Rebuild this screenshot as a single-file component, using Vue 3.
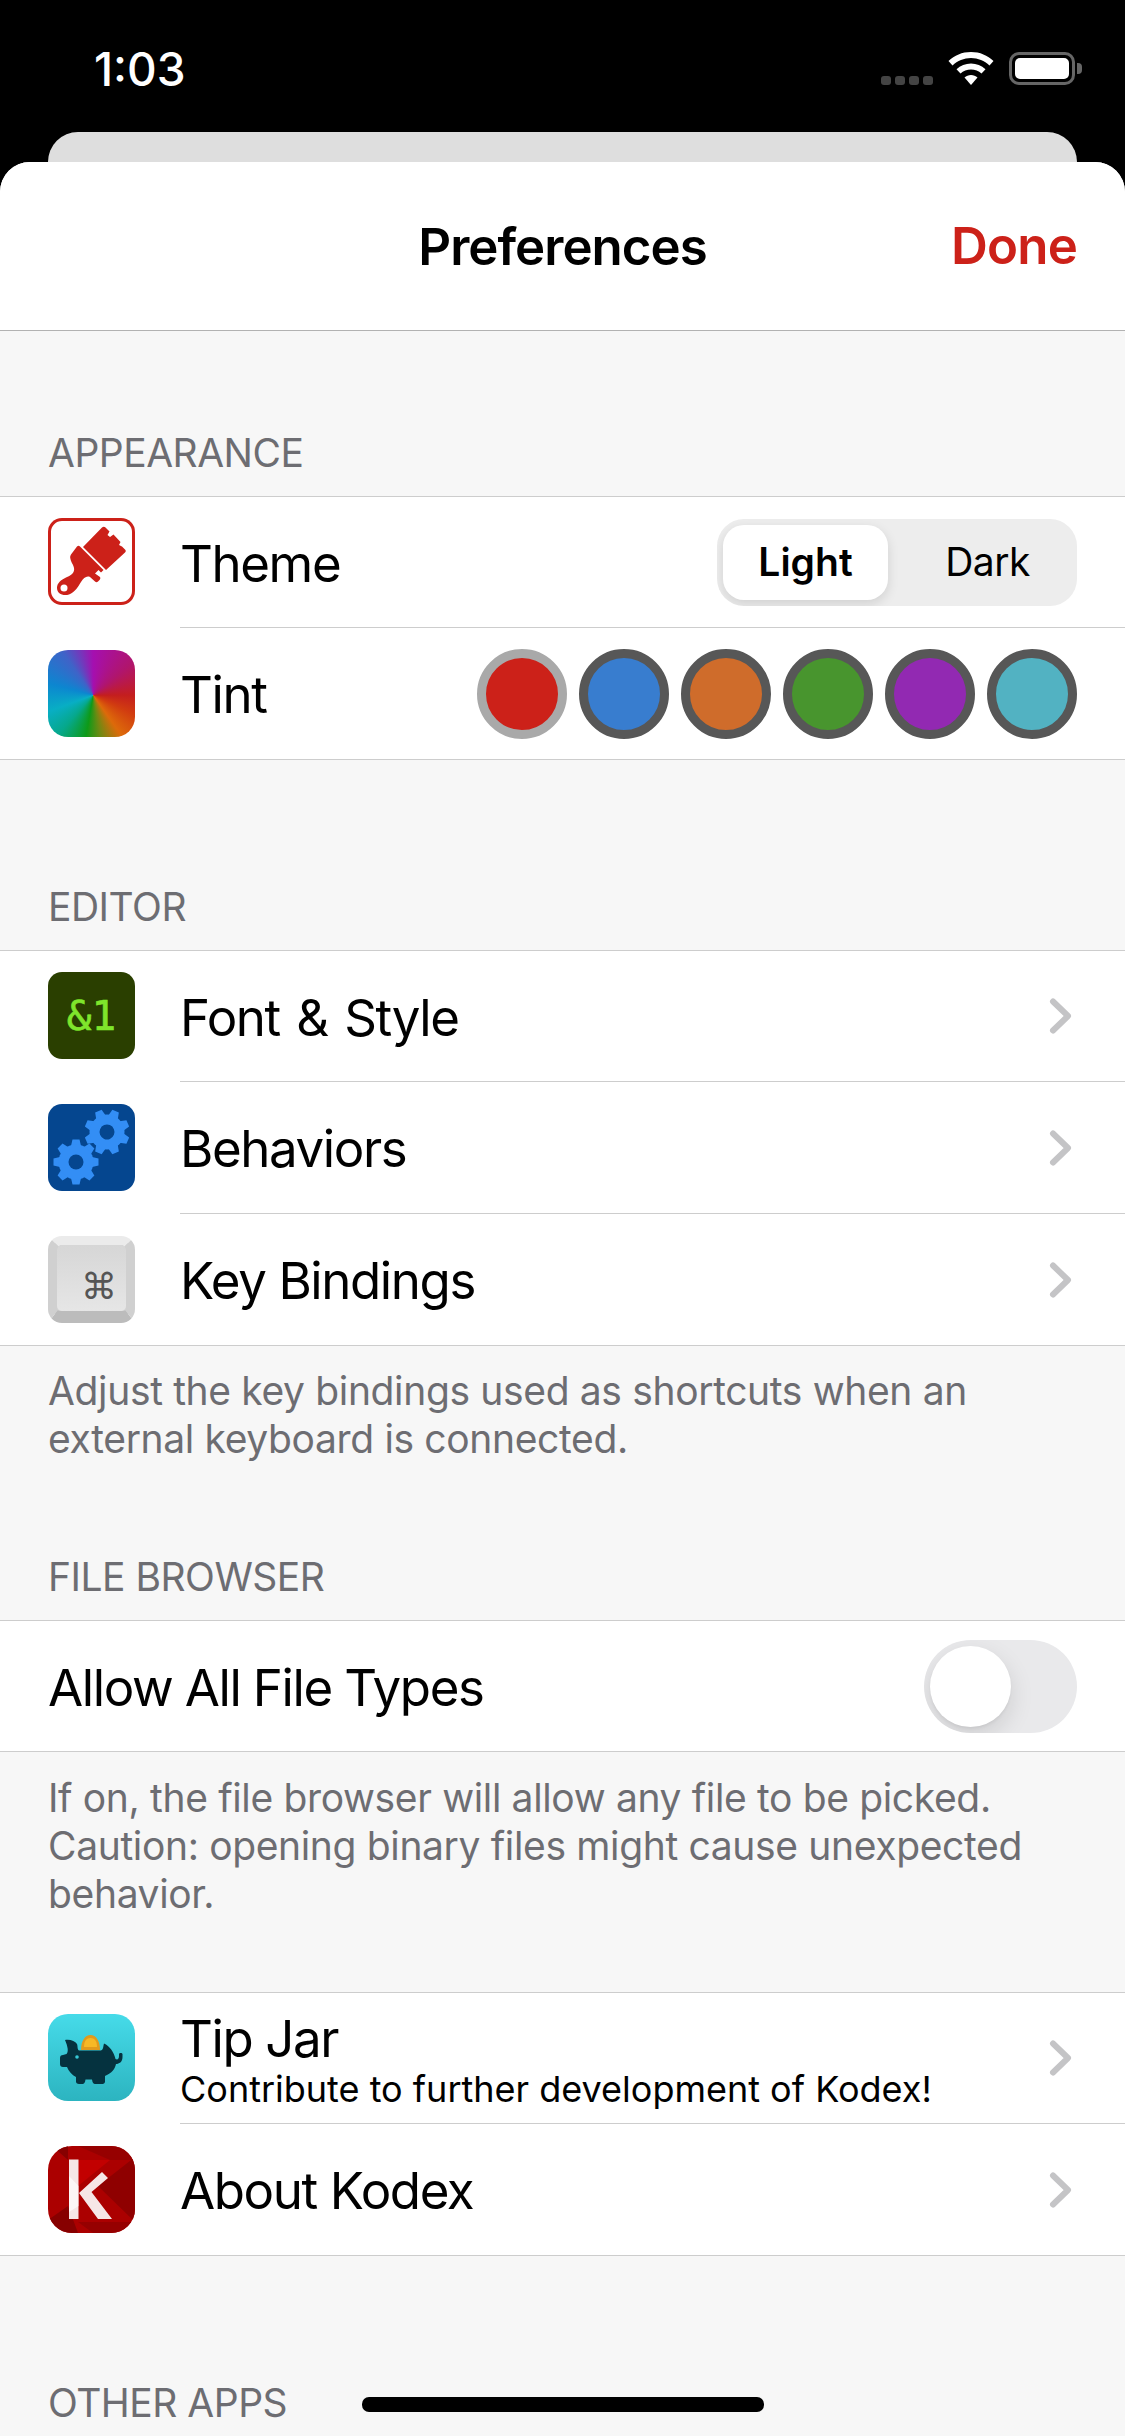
<script setup>
const tints = [
  { c: '#cc2119', r: '#a9a9a9' },
  { c: '#387dcf', r: '#575757' },
  { c: '#cf6c2b', r: '#575757' },
  { c: '#48952e', r: '#575757' },
  { c: '#9229b2', r: '#575757' },
  { c: '#52b2c2', r: '#575757' }
]
const gears = [
  { x: 59, y: 28, r: 22.5 },
  { x: 28, y: 58, r: 0 }
]
const teeth = [0, 45, 90, 135, 180, 225, 270, 315]
</script>

<template>
  <div class="screen">
    <header class="status">
      <span class="time">1:03</span>
      <div class="status-icons">
        <div class="signal"><i></i><i></i><i></i><i></i></div>
        <svg class="wifi" width="46" height="33" viewBox="0 0 46 33">
          <path fill="#fff" d="M23 0C14 0 6.500 3.400 0.500 9L4.500 13.500C9.500 8.800 16 6 23 6S36.500 8.800 41.500 13.500L45.500 9C39.500 3.400 32 0 23 0Z" />
          <path fill="#fff" d="M23 11.500C17.500 11.500 12.500 13.600 8.500 17.300L12.500 21.600C15.300 19 19 17.500 23 17.500S30.700 19 33.500 21.600L37.500 17.300C33.500 13.600 28.500 11.500 23 11.500Z" />
          <path fill="#fff" d="M23 23C20.500 23 18.300 24 16.500 25.500L23 33L29.500 25.500C27.700 24 25.500 23 23 23Z" />
        </svg>
        <div class="battery"><span class="level"></span></div>
        <span class="nub"></span>
      </div>
    </header>
    <div class="back-card"></div>

    <main class="sheet">
      <nav class="nav">
        <h1 class="title">Preferences</h1>
        <span class="done">Done</span>
      </nav>

      <h2 class="section first">APPEARANCE</h2>
      <section class="group">
        <div class="row">
          <div class="icon brush">
            <svg width="87" height="87" viewBox="0 0 87 87">
              <path fill="#cc2119" d="M54 9.500C55 8.500 56.500 8.500 57.500 9.500L61.500 13.500L59.500 17L62 19L65.500 16.500L72.500 24L71 27L74 28.500L77 31.500C78 32.500 78 33.500 77 34.500L58 52L35 29L54 9.500Z" />
              <path fill="#cc2119" d="M29 28.500C30 27.500 31 27.500 32 28.500L55.500 52L53 54.500L50.500 52L47 55.500L52 59C52.500 60 52.500 61 51.500 62L50 63.500C49 64.500 48 64.500 47 63.500L42 59C38.500 57.500 35.500 60 33 64C30 69 27 74 21 76.500C15 78.500 9 75.500 9 70C9 65 13 62 18 59.500C22.500 57.500 27 55 26 50C25.500 47 22.500 43 22.500 41C22 39.500 22 38 23 36.500L29 28.500Z" />
              <circle cx="16" cy="70" r="3.500" fill="#fff" />
            </svg>
          </div>
          <span class="label">Theme</span>
          <div class="segment">
            <span class="seg active">Light</span>
            <span class="seg dark">Dark</span>
          </div>
        </div>
        <div class="row">
          <div class="icon tint"></div>
          <span class="label">Tint</span>
          <div class="swatches">
            <span
              v-for="t in tints"
              :key="t.c"
              class="swatch"
              :style="{ background: t.c, borderColor: t.r }"
            ></span>
          </div>
        </div>
      </section>

      <h2 class="section">EDITOR</h2>
      <section class="group">
        <div class="row">
          <div class="icon font-icon">&amp;1</div>
          <span class="label wide-words">Font &amp; Style</span>
          <svg class="chev" width="29" height="36" viewBox="0 0 29 36"><path d="M5 3.500L20 18L5 32.500" /></svg>
        </div>
        <div class="row">
          <div class="icon gears">
            <svg width="87" height="87" viewBox="0 0 87 87">
              <g v-for="g in gears" :key="g.x" :transform="`translate(${g.x} ${g.y}) rotate(${g.r})`">
                <path v-for="a in teeth" :key="a" d="M-5.500 -14L-3.500 -22.500H3.500L5.500 -14Z" fill="#338ef5" :transform="`rotate(${a})`" />
                <circle r="17.500" fill="#338ef5" />
                <circle r="7.500" fill="#05468f" />
              </g>
            </svg>
          </div>
          <span class="label">Behaviors</span>
          <svg class="chev" width="29" height="36" viewBox="0 0 29 36"><path d="M5 3.500L20 18L5 32.500" /></svg>
        </div>
        <div class="row">
          <div class="icon key">
            <div class="keycap"><span class="cmd">⌘</span></div>
          </div>
          <span class="label">Key Bindings</span>
          <svg class="chev" width="29" height="36" viewBox="0 0 29 36"><path d="M5 3.500L20 18L5 32.500" /></svg>
        </div>
      </section>
      <p class="foot">Adjust the key bindings used as shortcuts when an external keyboard is connected.</p>

      <h2 class="section tight">FILE BROWSER</h2>
      <section class="group">
        <div class="row">
          <span class="label tight-words">Allow All File Types</span>
          <div class="toggle"><span class="knob"></span></div>
        </div>
      </section>
      <p class="foot long">If on, the file browser will allow any file to be picked. Caution: opening binary files might cause unexpected behavior.</p>

      <section class="group tip-group">
        <div class="row">
          <div class="icon piggy">
            <svg width="87" height="87" viewBox="0 0 87 87">
              <path fill="#e19a1c" d="M33 36C33 27 37 21 42.500 21S52 27 52 36Z" />
              <path fill="#f7b825" d="M36 33C36 27 38.500 24 42.500 24S49 27 49 33Z" />
              <path fill="#05323f" d="M17 26C22 25 27 27 29 30C30 33 29 35 31 36.500L53 36.500C55.500 35.500 55 33 56 29.500C61.500 32 66 38 67.500 45C69.500 46 71 45 71 42L71 40C71 38.500 74.500 38.500 74.500 40L74.500 43C74.500 48 71 50 68 50C67 55 64 59 57 62L57 67.500C57 69 56 70 54.500 70L47 70C45.500 70 44.500 69 44 65.500L37.500 65.500C37 69 36 70 34.500 70L31 70C29 70 28 69 28 67.500L28 63C24 61 20.500 57 19 53L15 53C13 53 12 52 12 50L12 44C12 42 13 41 15 41L18.500 40C21 37.500 19.500 32 17 26Z" />
              <circle cx="29" cy="43" r="1.800" fill="#37c8d6" />
            </svg>
          </div>
          <div class="stack">
            <span class="label">Tip Jar</span>
            <span class="sub">Contribute to further development of Kodex!</span>
          </div>
          <svg class="chev" width="29" height="36" viewBox="0 0 29 36"><path d="M5 3.500L20 18L5 32.500" /></svg>
        </div>
        <div class="row">
          <div class="icon kodex">
            <svg width="87" height="87" viewBox="0 0 87 87">
              <rect width="87" height="87" fill="#ab0000" />
              <path fill="#8f0000" d="M87 11L87 76L50 40Z" />
              <path fill="#960000" d="M30 0L87 0L87 14L62 14ZM45 87L87 87L87 76L30 76Z" />
              <path fill="#870000" d="M0 74L20 60L30 87L14 87ZM4 0L20 0L20 14Z" />
              <path fill="#c20000" d="M30 14L62 14L30 40Z" />
              <path fill="#f6e6e6" d="M21 13.500H30.500V73H21ZM54 26L60 32L43.500 46L64 73H50L31 47Z" />
              <path fill="#fff" d="M21 30L30.500 40V60L21 66Z" opacity=".65" />
            </svg>
          </div>
          <span class="label">About Kodex</span>
          <svg class="chev" width="29" height="36" viewBox="0 0 29 36"><path d="M5 3.500L20 18L5 32.500" /></svg>
        </div>
      </section>

      <h2 class="section">OTHER APPS</h2>
    </main>

    <div class="home"></div>
  </div>
</template>

<style scoped>
.screen {
  width: 1125px;
  height: 2436px;
  background: #000;
  overflow: hidden;
  position: relative;
  font-family: Inter, "Liberation Sans", sans-serif;
  color: #000;
}
.status {
  height: 132px;
  display: flex;
  justify-content: space-between;
  align-items: flex-start;
  padding: 0 43px 0 94px;
  box-sizing: border-box;
}
.time {
  color: #fff;
  font-size: 46px;
  font-weight: 500;
  line-height: 54px;
  margin-top: 42px;
}
.status-icons {
  display: flex;
  align-items: flex-start;
  margin-top: 52px;
}
.signal {
  display: flex;
  gap: 4px;
  margin-top: 24px;
  margin-right: 15px;
}
.signal i {
  width: 10px;
  height: 9px;
  border-radius: 3px;
  background: #444;
}
.wifi {
  margin-right: 15px;
}
.battery {
  width: 66px;
  height: 33px;
  border: 3px solid #666;
  border-radius: 10px;
  box-sizing: border-box;
  padding: 3px;
}
.level {
  display: block;
  height: 100%;
  background: #fff;
  border-radius: 5px;
}
.nub {
  width: 5px;
  height: 11px;
  margin: 11px 0 0 2px;
  background: #666;
  border-radius: 0 4px 4px 0;
}
.back-card {
  height: 30px;
  margin: 0 48px;
  background: #dedede;
  border-radius: 30px 30px 0 0;
}
.sheet {
  height: 2274px;
  background: #f7f7f7;
  border-radius: 30px 30px 0 0;
  overflow: hidden;
}
.nav {
  height: 169px;
  box-sizing: border-box;
  background: #fff;
  border-bottom: 1px solid #b2b2b2;
  display: flex;
  align-items: center;
  justify-content: center;
  position: relative;
  padding-top: 2px;
}
.title {
  margin: 0;
  font-size: 51px;
  font-weight: 600;
  letter-spacing: -1px;
  line-height: 60px;
}
.done {
  position: absolute;
  right: 48px;
  top: 54px;
  font-size: 51px;
  font-weight: 600;
  letter-spacing: -0.8px;
  line-height: 60px;
  color: #cc2119;
}
.section {
  margin: 0;
  padding: 0 48px 19px;
  height: 190px;
  box-sizing: border-box;
  font-size: 39px;
  font-weight: 400;
  letter-spacing: -0.5px;
  line-height: 48px;
  color: #6d6d72;
  display: flex;
  align-items: flex-end;
}
.section.first {
  height: 165px;
}
.section.tight {
  height: 157px;
}
.group {
  background: #fff;
  border-top: 1px solid #cdcdcd;
  border-bottom: 1px solid #cdcdcd;
}
.tip-group {
  margin-top: 74px;
}
.row {
  height: 130px;
  display: flex;
  align-items: center;
  padding: 0 48px;
  position: relative;
}
.row + .row {
  height: 132px;
  padding-top: 1px;
  box-sizing: border-box;
}
.row + .row::before {
  content: "";
  position: absolute;
  top: 0;
  left: 180px;
  right: 0;
  height: 1px;
  background: #cdcdcd;
}
.icon {
  width: 87px;
  height: 87px;
  flex: none;
  border-radius: 14px;
  margin-right: 45px;
  box-sizing: border-box;
  overflow: hidden;
}
.row:first-child .icon {
  margin-bottom: 1px;
}
.icon svg {
  display: block;
}
.label {
  font-size: 51px;
  letter-spacing: -1.4px;
  line-height: 60px;
  flex: 1;
  padding-top: 3px;
}
.wide-words {
  word-spacing: 3.5px;
}
.tight-words {
  word-spacing: -0.5px;
}
.brush {
  box-shadow: inset 0 0 0 3px #cc2119;
}
.tint {
  background: conic-gradient(from 0deg at 52% 52%, #a50fb0 0deg, #b0156d 50deg, #c41e1e 90deg, #d13c10 115deg, #dd6a0a 145deg, #6e8a12 170deg, #0e9a18 190deg, #06a88c 222deg, #08aec4 250deg, #0c86d0 285deg, #3f63c8 325deg, #a50fb0 360deg);
  border-radius: 20px;
}
.font-icon {
  background: #2a3f00;
  color: #7fe52c;
  font-family: "DejaVu Sans Mono", monospace;
  font-size: 41px;
  -webkit-text-stroke: 0.6px #7fe52c;
  display: flex;
  align-items: center;
  justify-content: center;
}
.gears {
  background: #05468f;
}
.key {
  background: #d2d2d2;
  border-top: 9px solid #ebebeb;
  border-bottom: 12px solid #bcbcbc;
  border-left: 9px solid #d0d0d0;
  border-right: 9px solid #d0d0d0;
}
.keycap {
  height: 100%;
  background: linear-gradient(#d6d6d6, #e6e6e6);
  border-radius: 5px;
  display: flex;
  align-items: flex-end;
  justify-content: flex-end;
}
.cmd {
  color: #555;
  font-family: "DejaVu Sans", sans-serif;
  font-size: 36px;
  line-height: 40px;
  margin: 0 9px 4px 0;
}
.piggy {
  background: linear-gradient(#46dbe9, #2cb4c0);
  border-radius: 20px;
}
.kodex {
  border-radius: 24px;
}
.stack {
  flex: 1;
  display: flex;
  flex-direction: column;
  height: 100%;
}
.stack .label {
  flex: none;
  padding-top: 0;
  margin-top: 16px;
}
.sub {
  font-size: 36px;
  line-height: 40px;
}
.chev {
  flex: none;
  fill: none;
  stroke: #c4c4c6;
  stroke-width: 6;
  stroke-linecap: round;
  stroke-linejoin: round;
}
.segment {
  width: 360px;
  height: 87px;
  box-sizing: border-box;
  background: #ededed;
  border-radius: 27px;
  padding: 6px;
  display: flex;
  overflow: hidden;
}
.seg {
  flex: 1;
  display: flex;
  align-items: center;
  justify-content: center;
  font-size: 39px;
  line-height: 48px;
}
.seg.dark {
  padding-left: 16px;
  letter-spacing: -0.5px;
}
.seg.active {
  flex: none;
  width: 165px;
  background: #fff;
  border-radius: 21px;
  font-weight: 600;
  box-shadow: 0 4px 12px rgba(0, 0, 0, 0.12);
}
.swatches {
  display: flex;
  gap: 12px;
}
.swatch {
  width: 90px;
  height: 90px;
  box-sizing: border-box;
  border: 9px solid;
  border-radius: 50%;
}
.foot {
  margin: 0;
  padding: 21px 48px 0;
  font-size: 39px;
  letter-spacing: -0.35px;
  line-height: 48px;
  color: #6d6d72;
}
.foot.long {
  padding-top: 22px;
}
.toggle {
  width: 153px;
  height: 93px;
  box-sizing: border-box;
  border-radius: 47px;
  background: #e9e9eb;
  padding: 6px;
  overflow: hidden;
}
.knob {
  display: block;
  width: 81px;
  height: 81px;
  border-radius: 50%;
  background: #fff;
  box-shadow: 0 9px 24px rgba(0, 0, 0, 0.12), 0 2px 3px rgba(0, 0, 0, 0.05);
}
.home {
  position: absolute;
  left: 362px;
  top: 2397px;
  width: 402px;
  height: 15px;
  border-radius: 7px;
  background: #000;
}
</style>
